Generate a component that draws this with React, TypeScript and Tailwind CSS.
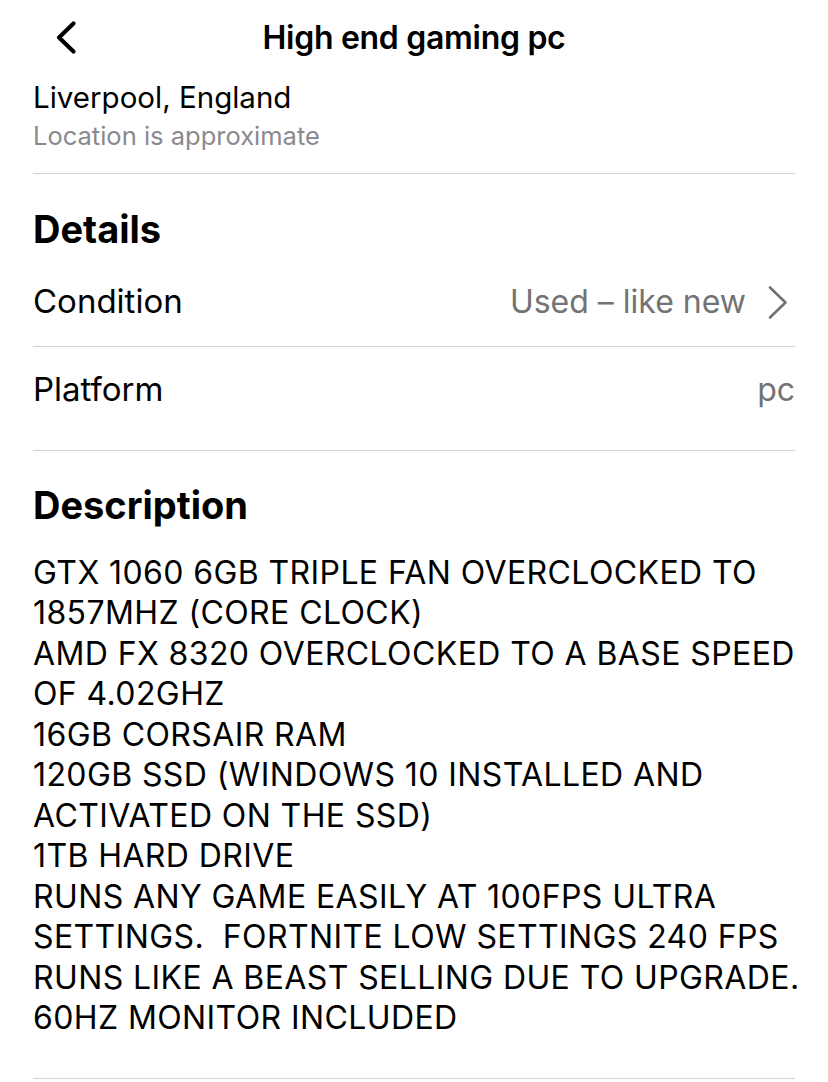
import React from "react";

const lines = [
  "GTX 1060 6GB TRIPLE FAN OVERCLOCKED TO",
  "1857MHZ (CORE CLOCK)",
  "AMD FX 8320 OVERCLOCKED TO A BASE SPEED",
  "OF 4.02GHZ",
  "16GB CORSAIR RAM",
  "120GB SSD (WINDOWS 10 INSTALLED AND",
  "ACTIVATED ON THE SSD)",
  "1TB HARD DRIVE",
  "RUNS ANY GAME EASILY AT 100FPS ULTRA",
  "SETTINGS.\u00a0 FORTNITE LOW SETTINGS 240 FPS",
  "RUNS LIKE A BEAST SELLING DUE TO UPGRADE.",
  "60HZ MONITOR INCLUDED",
];

export default function App() {
  return (
    <div className="w-[828px] h-[1082px] overflow-hidden bg-white text-black font-['Inter','Liberation_Sans',sans-serif]">
      <div className="relative h-[75px] flex items-center justify-center">
        <svg className="absolute left-[54px] top-[19px]" width="24" height="37" viewBox="0 0 24 37">
          <path d="M19.5 4.5 L5 18.5 L19.5 32.5" fill="none" stroke="#000" strokeWidth="4.2" strokeLinecap="round" strokeLinejoin="round" />
        </svg>
        <div className="text-[32px] font-semibold tracking-[-0.3px]">High end gaming pc</div>
      </div>
      <div className="px-[33px]">
        <div className="text-[29.5px] leading-[38px] mt-[3px]">Liverpool, England</div>
        <div className="text-[25.5px] leading-[40px] text-[#8a8a8e]">Location is approximate</div>
        <div className="h-px bg-[#d2d2d4] mt-[17px]" />
        <div className="text-[38px] font-bold leading-[44px] mt-[33px]">Details</div>
        <div className="flex items-center justify-between h-[88px] mt-[7px]">
          <div className="text-[33px]">Condition</div>
          <div className="flex items-center gap-[22px]">
            <div className="text-[32px] text-[#737373]">Used – like new</div>
            <svg width="20" height="35" viewBox="0 0 20 35" className="mr-[7px]">
              <path d="M2 2.5 L17.5 17.5 L2 32.5" fill="none" stroke="#717171" strokeWidth="2.6" strokeLinecap="round" strokeLinejoin="round" />
            </svg>
          </div>
        </div>
        <div className="h-px bg-[#d2d2d4]" />
        <div className="flex items-center justify-between h-[86px] mb-[17px]">
          <div className="text-[33px]">Platform</div>
          <div className="text-[32px] text-[#737373]">pc</div>
        </div>
        <div className="h-px bg-[#d2d2d4]" />
        <div className="text-[38px] font-bold leading-[44px] mt-[32px]">Description</div>
        <div className="mt-[26px] text-[32px] leading-[40.45px] tracking-[0.4px]">
          {lines.map((l, i) => (
            <div key={i} className="whitespace-nowrap">{l}</div>
          ))}
        </div>
        <div className="h-px bg-[#d2d2d4] mt-[40px]" />
      </div>
    </div>
  );
}
